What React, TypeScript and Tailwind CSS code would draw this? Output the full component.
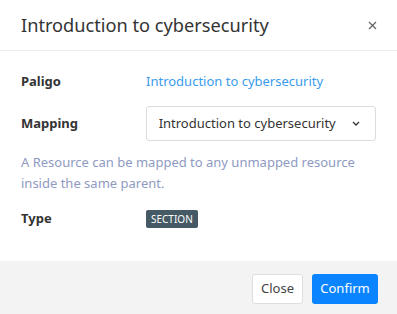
import React from "react";

export default function App() {
  return (
    <div className="w-[397px] h-[314px] bg-white flex flex-col" style={{ fontFamily: '"Noto Sans", sans-serif' }}>
      <div className="h-[51px] shrink-0 border-b border-[#ececec] flex items-center justify-between pl-[21px] pr-[20px]">
        <h1 className="text-[18.2px] text-[#333] leading-none">Introduction to cybersecurity</h1>
        <svg width="9" height="9" viewBox="0 0 9 9" className="text-[#666]">
          <path d="M1 1L8 8M8 1L1 8" stroke="currentColor" strokeWidth="1.3" />
        </svg>
      </div>
      <div className="flex-1 px-[21px] pt-[20px] text-[13px]">
        <div className="flex items-center h-[22px]">
          <div className="w-[125px] font-bold text-[#333]">Paligo</div>
          <a className="text-[#3a9ced]">Introduction to cybersecurity</a>
        </div>
        <div className="flex items-center mt-[13px]">
          <div className="w-[125px] font-bold text-[#333]">Mapping</div>
          <div className="w-[231px] h-[35px] border border-[#dcdcdc] rounded-[3px] flex items-center justify-between pl-[12px] pr-[15px] text-[#333] whitespace-nowrap">
            <span>Introduction to cybersecurity</span>
            <svg width="8" height="5" viewBox="0 0 8 5">
              <path d="M1 1L4 4L7 1" stroke="#333" strokeWidth="1.3" fill="none" />
            </svg>
          </div>
        </div>
        <p className="mt-[11px] text-[#8e9ac2] leading-[21px]">
          A Resource can be mapped to any unmapped resource inside the same parent.
        </p>
        <div className="flex items-center h-[18px] mt-[16px]">
          <div className="w-[125px] font-bold text-[#333]">Type</div>
          <span className="h-[18px] flex items-center bg-[#455a64] text-white text-[10px] px-[5px] rounded-[2px]">SECTION</span>
        </div>
      </div>
      <div className="h-[53px] shrink-0 bg-[#f3f3f3] flex items-start justify-end gap-[9px] pt-[13px] pr-[19px] text-[13px]">
        <button className="h-[30px] w-[51px] bg-white border border-[#dedede] rounded-[3px] text-[#444]">Close</button>
        <button className="h-[30px] w-[66px] bg-[#0a84ff] rounded-[3px] text-white">Confirm</button>
      </div>
    </div>
  );
}
